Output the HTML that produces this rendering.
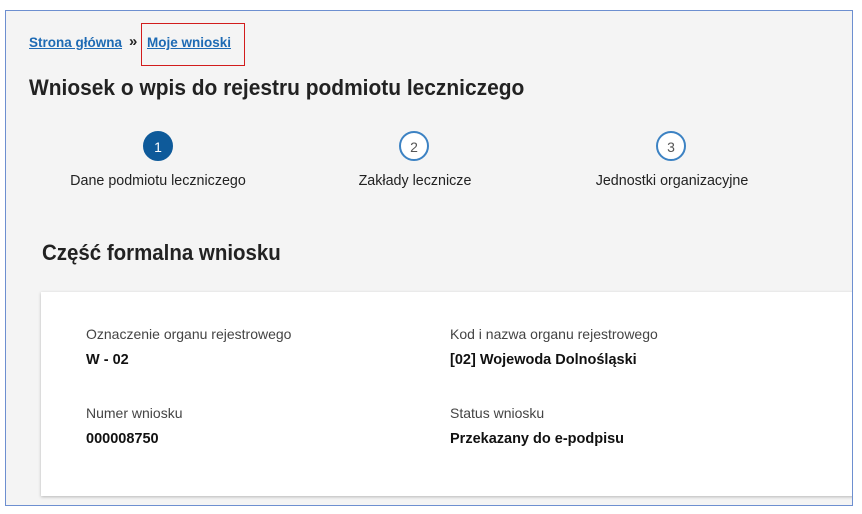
<!DOCTYPE html>
<html><head><meta charset="utf-8"><style>
body{margin:0;width:862px;height:514px;background:#fff;position:relative;overflow:hidden;font-family:"Liberation Sans",sans-serif;}
.frame{position:absolute;left:5px;top:10px;width:846px;height:494px;border:1px solid #6d8fd0;background:#f4f4f4;overflow:hidden}
.a{position:absolute;white-space:nowrap}
.bc{font-size:13.5px;font-weight:bold;color:#1d6ab4;text-decoration:underline}
.circ{position:absolute;width:30px;height:30px;border-radius:50%;box-sizing:border-box;text-align:center;line-height:28px;font-size:14px}
.done{background:#0e5a9a;color:#fff;border:2px solid #0e5a9a}
.todo{background:#fff;color:#555;border:2px solid #3c82c3}
.step{font-size:14.3px;color:#222;transform:translateX(-50%)}
.card{position:absolute;left:35px;top:281px;width:820px;height:204px;background:#fff;box-shadow:0 1px 3px rgba(0,0,0,.25)}
.lab{font-size:14px;color:#444}
.val{font-size:14.5px;font-weight:bold;color:#111}
</style></head><body>
<div class="frame">
<div class="a bc" style="left:23px;top:24px">Strona główna</div>
<div class="a" style="left:123px;top:22px;font-size:15px;font-weight:bold;color:#222">»</div>
<div class="a bc" style="left:141px;top:24px">Moje wnioski</div>
<div class="a" style="left:135px;top:12px;width:104px;height:43px;border:1px solid #d21c1c;box-sizing:border-box"></div>
<div class="a" style="left:23px;top:64px;font-size:22.5px;font-weight:bold;color:#222;transform:scaleX(0.93);transform-origin:left">Wniosek o wpis do rejestru podmiotu leczniczego</div>
<div class="circ done" style="left:137px;top:120px">1</div>
<div class="circ todo" style="left:393px;top:120px">2</div>
<div class="circ todo" style="left:650px;top:120px">3</div>
<div class="a step" style="left:152px;top:162px">Dane podmiotu leczniczego</div>
<div class="a step" style="left:409px;top:162px">Zakłady lecznicze</div>
<div class="a step" style="left:666px;top:162px">Jednostki organizacyjne</div>
<div class="a" style="left:36px;top:229px;font-size:22px;font-weight:bold;color:#222;transform:scaleX(0.93);transform-origin:left">Część formalna wniosku</div>
<div class="card">
<div class="a lab" style="left:45px;top:34px">Oznaczenie organu rejestrowego</div>
<div class="a val" style="left:45px;top:60px">W - 02</div>
<div class="a lab" style="left:409px;top:34px">Kod i nazwa organu rejestrowego</div>
<div class="a val" style="left:409px;top:60px">[02] Wojewoda Dolnośląski</div>
<div class="a lab" style="left:45px;top:113px">Numer wniosku</div>
<div class="a val" style="left:45px;top:139px">000008750</div>
<div class="a lab" style="left:409px;top:113px">Status wniosku</div>
<div class="a val" style="left:409px;top:139px">Przekazany do e-podpisu</div>
</div>
</div>
</body></html>
